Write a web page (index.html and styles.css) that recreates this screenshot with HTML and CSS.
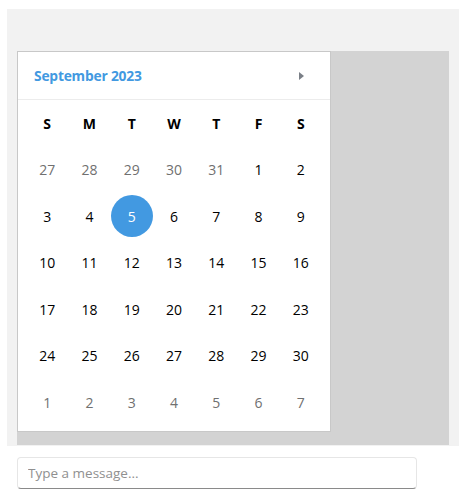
FILE: index.html
```html
<!DOCTYPE html>
<html>
<head>
<meta charset="utf-8">
<link rel="stylesheet" href="styles.css">
</head>
<body>
<div class="app">
  <div class="stage">
    <div class="calendar">
      <div class="cal-header">
        <span class="cal-title">September 2023</span>
        <span class="cal-next"></span>
      </div>
      <div class="cal-grid">
        <div class="wd">S</div><div class="wd">M</div><div class="wd">T</div><div class="wd">W</div><div class="wd">T</div><div class="wd">F</div><div class="wd">S</div>
        <div class="day other">27</div><div class="day other">28</div><div class="day other">29</div><div class="day other">30</div><div class="day other">31</div><div class="day">1</div><div class="day">2</div>
        <div class="day">3</div><div class="day">4</div><div class="day selected"><span>5</span></div><div class="day">6</div><div class="day">7</div><div class="day">8</div><div class="day">9</div>
        <div class="day">10</div><div class="day">11</div><div class="day">12</div><div class="day">13</div><div class="day">14</div><div class="day">15</div><div class="day">16</div>
        <div class="day">17</div><div class="day">18</div><div class="day">19</div><div class="day">20</div><div class="day">21</div><div class="day">22</div><div class="day">23</div>
        <div class="day">24</div><div class="day">25</div><div class="day">26</div><div class="day">27</div><div class="day">28</div><div class="day">29</div><div class="day">30</div>
        <div class="day other">1</div><div class="day other">2</div><div class="day other">3</div><div class="day other">4</div><div class="day other">5</div><div class="day other">6</div><div class="day other">7</div>
      </div>
    </div>
  </div>
</div>
<div class="composer">
  <input class="msg" type="text" placeholder="Type a message...">
</div>
</body>
</html>
```
FILE: styles.css
```css
* { box-sizing: border-box; }
body {
  margin: 0;
  background: #fff;
  font-family: "Open Sans", "Noto Sans", sans-serif;
  font-size: 14px;
  color: #000;
}
.app {
  margin: 9px 6px 0 7px;
  width: 452px;
  height: 437px;
  background: #f2f2f2;
  padding: 42px 10px 1px 10px;
}
.stage {
  background: #d3d3d3;
  height: 394px;
}
.calendar {
  width: 314px;
  height: 381px;
  background: #fff;
  border: 1px solid #c8c8c8;
}
.cal-header {
  height: 48px;
  border-bottom: 1px solid #ececec;
  display: flex;
  align-items: center;
  justify-content: space-between;
  padding: 0 26px 0 16px;
}
.cal-title {
  color: #4299e1;
  font-weight: 700;
  font-size: 13.8px;
  letter-spacing: -0.2px;
}
.cal-next {
  width: 0;
  height: 0;
  border-top: 4px solid transparent;
  border-bottom: 4px solid transparent;
  border-left: 5px solid #7a7f87;
}
.cal-grid {
  display: grid;
  grid-template-columns: repeat(7, 1fr);
  grid-auto-rows: 46.5px;
  padding: 0 8px;
}
.wd {
  display: flex;
  align-items: center;
  justify-content: center;
  font-weight: 700;
}
.day {
  display: flex;
  align-items: center;
  justify-content: center;
}
.day.other { color: #707070; }
.day.selected span {
  width: 42px;
  height: 42px;
  border-radius: 50%;
  background: #4299e1;
  color: #fff;
  display: flex;
  align-items: center;
  justify-content: center;
}
.composer {
  padding: 11px 0 0 17px;
}
.msg {
  width: 400px;
  height: 32px;
  border: 1px solid #e6e6e6;
  border-bottom: 1px solid #8a8a8a;
  border-radius: 4px;
  padding: 0 10px;
  font-family: inherit;
  font-size: 13.5px;
  outline: none;
}
.msg::placeholder { color: #909090; }
```
